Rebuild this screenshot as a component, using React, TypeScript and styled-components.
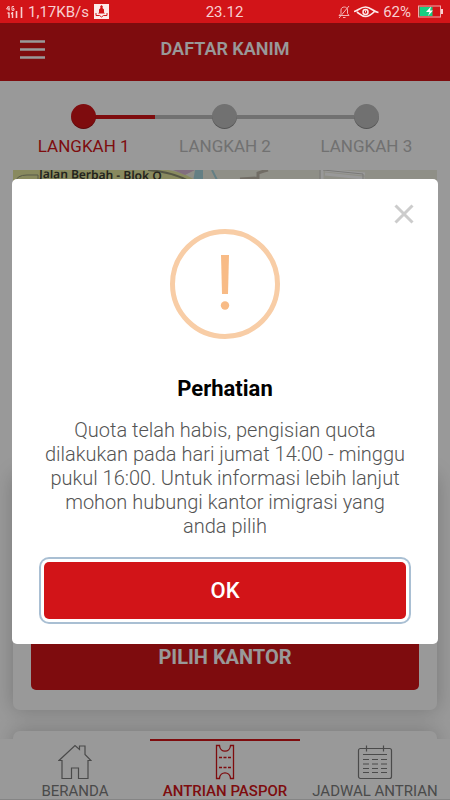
import React from "react";
import styled, { createGlobalStyle } from "styled-components";

const red = "#d21418";

const GlobalStyle = createGlobalStyle`
  *, *::before, *::after { box-sizing: border-box; }
  body { margin: 0; font-family: Roboto, "Noto Sans", sans-serif; background: #fff; }
  button { font-family: inherit; cursor: pointer; }
  h1, h2, p { margin: 0; }
  svg { display: block; flex: none; }
`;

const Screen = styled.div`
  display: flex;
  flex-direction: column;
  height: 100vh;
  overflow: hidden;
`;

const StatusBar = styled.div`
  display: grid;
  grid-template-columns: 1fr auto 1fr;
  align-items: center;
  flex: none;
  height: 23px;
  padding: 0 7px 0 6px;
  background: ${red};
  color: #f8cfd0;
  font-size: 15px;
  line-height: 22px;
`;

const StatusGroup = styled.div<{ $end?: boolean }>`
  display: flex;
  align-items: center;
  gap: ${(p) => (p.$end ? 4 : 5)}px;
  justify-content: ${(p) => (p.$end ? "flex-end" : "flex-start")};
`;

const BatterySlot = styled.span`
  padding-left: 3px;
`;

const AppArea = styled.div`
  position: relative;
  display: flex;
  flex-direction: column;
  flex: 1;
  min-height: 0;
`;

const Header = styled.header`
  display: grid;
  grid-template-columns: 64px 1fr 64px;
  align-items: center;
  flex: none;
  height: 58px;
  padding-bottom: 6px;
  background: ${red};
`;

const MenuButton = styled.button`
  display: flex;
  justify-content: center;
  padding: 0;
  border: 0;
  background: none;
`;

const HeaderTitle = styled.h1`
  color: #fff;
  font-size: 18px;
  font-weight: 600;
  line-height: 20px;
  text-align: center;
`;

const Content = styled.main`
  flex: 1;
  min-height: 0;
  overflow: hidden;
  padding: 0 13px;
`;

const Steps = styled.ol`
  display: grid;
  grid-template-columns: repeat(3, 1fr);
  margin: 0;
  padding: 23px 0 13px;
  list-style: none;
`;

const Step = styled.li<{ $active?: boolean }>`
  position: relative;
  display: flex;
  flex-direction: column;
  align-items: center;
  gap: 6px;
  color: ${(p) => (p.$active ? red : "#bcbcbc")};
  font-size: 17px;
  line-height: 22px;
  white-space: nowrap;

  &:not(:last-child)::before {
    content: "";
    position: absolute;
    top: 11px;
    left: 50%;
    width: 100%;
    height: 4px;
    background: ${(p) => (p.$active ? `linear-gradient(to right, ${red} 50%, #bcbcbc 50%)` : "#bcbcbc")};
  }
`;

const StepDot = styled.span<{ $active?: boolean }>`
  position: relative;
  z-index: 1;
  width: 25px;
  height: 25px;
  border-radius: 50%;
  background: ${(p) => (p.$active ? red : "#bcbcbc")};
  box-shadow: inset 0 -1px 0 rgba(0, 0, 0, 0.25);
`;

const MapPanel = styled.div`
  height: 283px;
  overflow: hidden;
  background: #efeee2;
`;

const Card = styled.section`
  margin-top: 21px;
  padding: 20px 18px;
  border-radius: 7px;
  background: #fff;
  box-shadow: 0 0 20px rgba(0, 0, 0, 0.22);
`;

const OfficeCard = styled(Card)`
  display: flex;
  flex-direction: column;
  justify-content: flex-end;
  min-height: 236px;
`;

const NextCard = styled(Card)`
  height: 100px;
`;

const PrimaryButton = styled.button`
  width: 100%;
  height: 66px;
  padding: 0;
  border: 0;
  border-radius: 5px;
  background: ${red};
  color: #fff;
  font-size: 20px;
  font-weight: 700;
`;

const BottomNav = styled.nav`
  position: relative;
  display: grid;
  grid-template-columns: repeat(3, 1fr);
  flex: none;
  height: 61px;
  background: #fff;
  border-bottom: 1px solid #dedede;
`;

const NavItem = styled.a<{ $active?: boolean }>`
  display: flex;
  flex-direction: column;
  align-items: center;
  gap: 2px;
  padding-top: 3px;
  border-top: 2px solid ${(p) => (p.$active ? red : "transparent")};
  color: ${(p) => (p.$active ? red : "#7c7c7c")};
  font-size: 15px;
  font-weight: ${(p) => (p.$active ? 500 : 400)};
  line-height: 18px;
  text-decoration: none;
  white-space: nowrap;
`;

const Overlay = styled.div`
  position: absolute;
  inset: 0;
  z-index: 5;
  display: flex;
  align-items: center;
  padding: 0 12px;
  background: rgba(0, 0, 0, 0.4);
`;

const Dialog = styled.div`
  position: relative;
  display: flex;
  flex-direction: column;
  align-items: center;
  width: 100%;
  padding: 50px 32px 25px;
  border-radius: 5px;
  background: #fff;
  text-align: center;
`;

const CloseButton = styled.button`
  position: absolute;
  top: 20px;
  right: 19px;
  display: flex;
  padding: 5px;
  border: 0;
  background: none;
`;

const DialogTitle = styled.h2`
  margin-top: 35px;
  color: #000;
  font-size: 22px;
  font-weight: 700;
  line-height: 30px;
`;

const DialogText = styled.p`
  margin-top: 14px;
  color: #545454;
  font-size: 20px;
  font-weight: 300;
  line-height: 24px;
`;

const OkButton = styled.button`
  align-self: stretch;
  height: 57px;
  margin-top: 24px;
  border: 0;
  border-radius: 5px;
  background: ${red};
  color: #fff;
  font-size: 22px;
  font-weight: 500;
  box-shadow: 0 0 0 3px #fff, 0 0 0 5px #a9bfd3;
`;

const SignalIcon = () => (
  <svg width="17" height="14" viewBox="0 0 17 14" fill="none" stroke="#f8cfd0" aria-hidden="true">
    <path d="M2.5 1L.6 4H4M3 1v5M8 1.6H6v3.7h2V3.5H7" strokeWidth="1" />
    <path d="M1.5 8h2M3 8v5M6.500 7v6M5 8.500h2" strokeWidth="1.400" />
    <path d="M10.5 13V6M15.5 13V2" strokeWidth="1.6" />
  </svg>
);

const AppBadgeIcon = () => (
  <svg width="15" height="15" viewBox="0 0 15 15" aria-hidden="true">
    <rect width="15" height="15" fill="#fde9e9" />
    <path d="M7.500 1l1.400 1.500-.4 1.500 1.500 1.500v3l1 1h-7l1-1v-3L6.500 4l-.4-1.500z" fill={red} />
    <path d="M2 9v2.500h3.500l2 1.500 2-1.500H13V9" stroke={red} fill="none" />
  </svg>
);

const MutedBellIcon = () => (
  <svg width="12" height="14" viewBox="0 0 12 14" fill="none" stroke="#f4b4b5" aria-hidden="true">
    <path d="M1 10.500h10L9.500 8.500V5C9.500 1 3 1 3 5v3.500L1 10.500M5 12.500h2.500M1 13L11 1" />
  </svg>
);

const EyeIcon = () => (
  <svg width="25" height="14" viewBox="0 0 25 14" fill="none" stroke="#fde9e9" aria-hidden="true">
    <path d="M0 6.500C4 6 6 2 11.500 2S19 6.500 24.500 7.500M3 7c4 3 5 4.500 8.500 4.500S18 9 20.500 6.500" strokeWidth="1.700" />
    <circle cx="11.500" cy="7" r="2.500" strokeWidth="1.500" />
    <path d="M11.500 7.500V5.500" />
  </svg>
);

const BatteryIcon = () => (
  <svg width="25" height="13" viewBox="0 0 25 13" aria-hidden="true">
    <rect x=".5" y="1" width="22" height="11" fill="none" stroke="#f2a9aa" />
    <rect x="1.500" y="2" width="13" height="9" fill="#17cf82" />
    <path d="M24 4v5" stroke="#f8cfd0" strokeWidth="2" />
    <path d="M13 1.500L8 7h3.500L10 11l5-5.500h-3z" fill="#fff" />
  </svg>
);

const MapDrawing = () => (
  <svg width="100%" height="284" aria-label="Peta lokasi" role="img">
    <path d="M0 0H155Q176 3 188 15H0z" fill="#e4e79e" />
    <path d="M135 0Q160 2 178 12" fill="none" stroke="#8e9072" strokeWidth="2" />
    <path d="M2 12Q4 5 14 5H25V12" fill="none" stroke="#93967a" />
    <path d="M160 0l12 5 10-5" fill="#d7b7d3" />
    <path d="M182 0h8v12h-10z" fill="#a7d4dc" />
    <path d="M199 0l6 12" stroke="#a7d4dc" strokeWidth="2" />
    <path d="M227 9l17-1 3 4M245 10V3l6-2 4-1" fill="none" stroke="#bdb6a9" strokeWidth="3" />
    <path d="M309 0v12M312 4l38 4v5M312 0l40 4" fill="none" stroke="#fff" strokeWidth="3" />
    <path d="M307 0v12M350 9v-5l-40-4" fill="none" stroke="#cac9c5" />
    <text x="26" y="8" transform="rotate(1 26 8)" fill="#3b3b33" fontFamily="Noto Sans, sans-serif" fontSize="12" fontWeight="600">
      Jalan Berbah - Blok O
    </text>
  </svg>
);

const HouseIcon = () => (
  <svg width="34" height="36" viewBox="0 0 34 36" fill="none" stroke="currentColor" strokeWidth="1.200" aria-hidden="true">
    <path d="M4 34.500V16.500H1L17 1.500l4.500 4V2H27v8.500l6 6h-3v18h-9.500v-10.500h-7v10.500z" />
  </svg>
);

const TicketIcon = () => (
  <svg width="20" height="36" viewBox="0 0 20 36" fill="none" stroke="currentColor" strokeWidth="1.300" aria-hidden="true">
    <path d="M1.500 1.500H4.500C5 9 15 9 15.500 1.500H18.500V34.500H15.500C15 27 5 27 4.500 34.500H1.500z" />
    <path d="M4 13.500h13M4 23.500h13" strokeDasharray="3 1.500" />
  </svg>
);

const CalendarIcon = () => (
  <svg width="36" height="36" viewBox="0 0 36 36" fill="none" stroke="currentColor" strokeWidth="1.200" aria-hidden="true">
    <rect x="1.500" y="4.500" width="33" height="30" rx="2" />
    <path d="M9.500 1.500v6M26.500 1.500v6M6 10.500h24" />
    <path d="M6 15.500h24M6 20h24M6 24.500h24M6 28.500h24" strokeDasharray="6 3" />
  </svg>
);

const steps = ["LANGKAH 1", "LANGKAH 2", "LANGKAH 3"];

const navItems = [
  { label: "BERANDA", icon: <HouseIcon /> },
  { label: "ANTRIAN PASPOR", icon: <TicketIcon />, active: true },
  { label: "JADWAL ANTRIAN", icon: <CalendarIcon /> },
];

export default function App() {
  return (
    <>
      <GlobalStyle />
      <Screen>
        <StatusBar>
          <StatusGroup>
            <SignalIcon />
            <span>1,17KB/s</span>
            <AppBadgeIcon />
          </StatusGroup>
          <span>23.12</span>
          <StatusGroup $end>
            <MutedBellIcon />
            <EyeIcon />
            <span>62%</span>
            <BatterySlot>
              <BatteryIcon />
            </BatterySlot>
          </StatusGroup>
        </StatusBar>
        <AppArea>
          <Header>
            <MenuButton aria-label="Menu">
              <svg width="25" height="19" viewBox="0 0 25 19" aria-hidden="true">
                <path d="M0 1.500h25M0 9.500h25M0 17.500h25" stroke="#fff" strokeWidth="2.500" />
              </svg>
            </MenuButton>
            <HeaderTitle>DAFTAR KANIM</HeaderTitle>
          </Header>
          <Content>
            <Steps>
              {steps.map((label, i) => (
                <Step key={label} $active={i === 0}>
                  <StepDot $active={i === 0} />
                  {label}
                </Step>
              ))}
            </Steps>
            <MapPanel>
              <MapDrawing />
            </MapPanel>
            <OfficeCard>
              <PrimaryButton>PILIH KANTOR</PrimaryButton>
            </OfficeCard>
            <NextCard />
          </Content>
          <BottomNav>
            {navItems.map((item) => (
              <NavItem key={item.label} href="#" $active={item.active}>
                {item.icon}
                {item.label}
              </NavItem>
            ))}
          </BottomNav>
          <Overlay>
            <Dialog role="dialog" aria-modal="true" aria-labelledby="notice-title">
              <CloseButton aria-label="Tutup">
                <svg width="20" height="20" viewBox="0 0 20 20" aria-hidden="true">
                  <path d="M1.500 1.500l17 17M18.500 1.500l-17 17" stroke="#ccc" strokeWidth="3" />
                </svg>
              </CloseButton>
              <svg width="110" height="110" viewBox="0 0 110 110" aria-hidden="true">
                <circle cx="55" cy="55" r="52.500" fill="none" stroke="#f8cda6" strokeWidth="5" />
                <path d="M51 26h8l-1 39h-6z" fill="#f8bb86" />
                <circle cx="55" cy="76.500" r="4.200" fill="#f8bb86" />
              </svg>
              <DialogTitle id="notice-title">Perhatian</DialogTitle>
              <DialogText>
                Quota telah habis, pengisian quota dilakukan pada hari jumat 14:00 - minggu pukul 16:00. Untuk informasi
                lebih lanjut mohon hubungi kantor imigrasi yang anda pilih
              </DialogText>
              <OkButton>OK</OkButton>
            </Dialog>
          </Overlay>
        </AppArea>
      </Screen>
    </>
  );
}
